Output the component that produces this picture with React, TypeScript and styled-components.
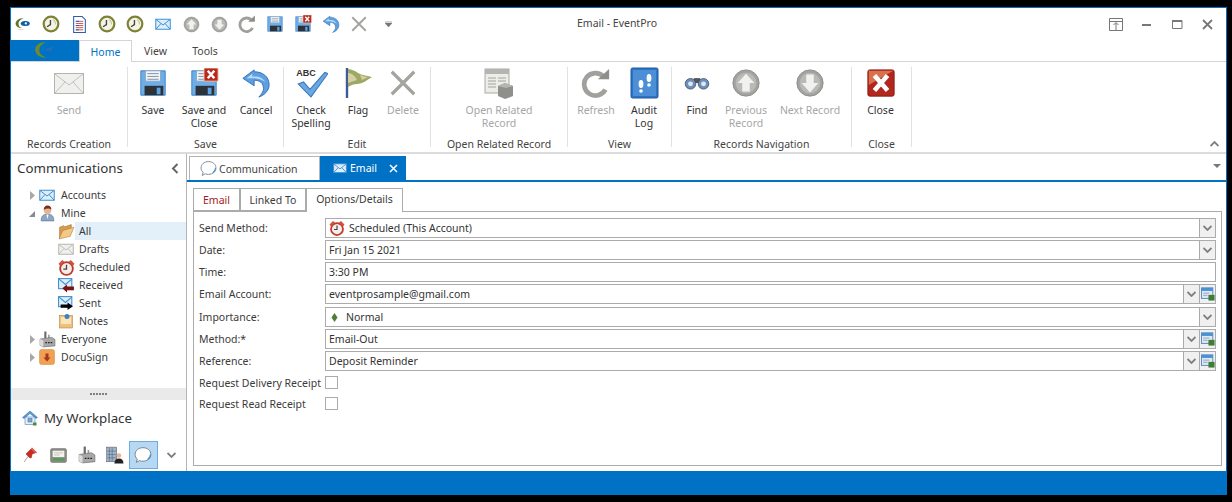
import React from 'react';
import styled, { createGlobalStyle } from 'styled-components';

const Global = createGlobalStyle`
  html, body { margin: 0; padding: 0; background: #000; }
  body { font-family: "Noto Sans", "Liberation Sans", sans-serif; font-size: 10.5px; color: #333; }
  * { box-sizing: border-box; }
`;

const BLUE = '#0072c6';

const Window = styled.div`
  width: 1217px;
  height: 488px;
  margin: 7px 0 0 10px;
  background: #fff;
  border: 1px solid ${BLUE};
  border-bottom: 0;
  display: flex;
  flex-direction: column;
  overflow: hidden;
`;

/* title bar */
const TitleBar = styled.div`
  height: 32px;
  flex: none;
  display: flex;
  align-items: center;
  position: relative;
`;
const Qat = styled.div`
  display: flex;
  align-items: center;
  margin-left: -2px;
`;
const QatSlot = styled.div<{ $w?: number }>`
  width: ${(p) => p.$w ?? 28}px;
  height: 24px;
  display: flex;
  align-items: center;
  justify-content: center;
`;
const Title = styled.div`
  position: absolute;
  left: 520px;
  width: 172px;
  top: 7px;
  text-align: center;
  line-height: 16px;
  color: #444;
`;
const WinButtons = styled.div`
  margin-left: auto;
  display: flex;
  margin-right: 3px;
`;
const WinBtn = styled.div`
  width: 30.5px;
  height: 24px;
  display: flex;
  align-items: center;
  justify-content: center;
`;

/* ribbon tabs */
const TabStrip = styled.div`
  height: 22px;
  flex: none;
  display: flex;
  border-bottom: 1px solid #d4d4d4;
`;
const FileTab = styled.div`
  width: 68px;
  height: 21px;
  background: ${BLUE};
  display: flex;
  align-items: center;
  justify-content: center;
`;
const RibbonTab = styled.div<{ $w: number; $active?: boolean }>`
  width: ${(p) => p.$w}px;
  height: ${(p) => (p.$active ? 22 : 21)}px;
  display: flex;
  align-items: center;
  justify-content: center;
  color: ${(p) => (p.$active ? BLUE : '#444')};
  background: #fff;
  ${(p) => p.$active && 'border: 1px solid #d4d4d4; border-bottom: 0;'}
`;

/* ribbon */
const Ribbon = styled.div`
  height: 92px;
  flex: none;
  display: flex;
  padding-top: 5px;
  border-bottom: 2px solid #dcdcdc;
  position: relative;
`;
const Group = styled.div<{ $w: number }>`
  width: ${(p) => p.$w}px;
  height: 80px;
  flex: none;
  display: flex;
  flex-direction: column;
  border-right: 1px solid #e1e1e1;
`;
const GroupButtons = styled.div<{ $start?: boolean }>`
  height: 71px;
  flex: none;
  display: flex;
  justify-content: ${(p) => (p.$start ? 'flex-start' : 'center')};
`;
const GroupLabel = styled.div`
  height: 9px;
  line-height: 13px;
  text-align: center;
  color: #444;
  white-space: nowrap;
`;
const RibbonBtn = styled.div<{ $w: number; $off?: boolean }>`
  width: ${(p) => p.$w}px;
  display: flex;
  flex-direction: column;
  align-items: center;
  text-align: center;
  line-height: 13px;
  color: ${(p) => (p.$off ? '#a6a6a6' : '#333')};
`;
const BtnIcon = styled.div`
  height: 32px;
  margin-bottom: 5px;
  display: flex;
  align-items: center;
  justify-content: center;
`;
const Collapse = styled.div`
  position: absolute;
  right: 7px;
  bottom: 5px;
  line-height: 0;
`;

/* main area */
const Main = styled.div`
  flex: 1;
  min-height: 0;
  display: flex;
`;
const SidePane = styled.div`
  width: 176px;
  flex: none;
  display: flex;
  flex-direction: column;
  border-right: 1px solid #b4b4b4;
`;
const PaneHeader = styled.div`
  height: 30px;
  padding: 0 7px 2px 6px;
  display: flex;
  align-items: center;
  justify-content: space-between;
  font-size: 13.3px;
  color: #333;
`;
const Tree = styled.div`
  flex: 1;
  padding-top: 2px;
`;
const TreeRow = styled.div`
  height: 18px;
  display: flex;
  align-items: center;
  padding-left: 15px;
`;
const Caret = styled.div`
  width: 12px;
  display: flex;
  justify-content: center;
`;
const TreeIcon = styled.div`
  width: 18px;
  height: 18px;
  display: flex;
  align-items: center;
  justify-content: center;
`;
const ChildRow = styled.div`
  height: 18px;
  display: flex;
  align-items: center;
  padding-left: 46px;
`;
const TreeLabel = styled.div<{ $selected?: boolean; $child?: boolean }>`
  flex: ${(p) => (p.$selected ? 1 : 'none')};
  height: 18px;
  line-height: 18px;
  padding-left: ${(p) => (p.$child ? 4 : 5)}px;
  background: ${(p) => (p.$selected ? '#e3eff9' : 'transparent')};
  color: #3b3b3b;
`;
const Splitter = styled.div`
  height: 12px;
  flex: none;
  background: #eaeaea;
  display: flex;
  align-items: center;
  justify-content: center;
  gap: 1px;
`;
const Grip = styled.i`
  width: 2px;
  height: 2px;
  background: #808080;
`;
const Workplace = styled.div`
  height: 41px;
  flex: none;
  display: flex;
  align-items: center;
  gap: 6px;
  padding: 0 0 5px 11px;
  font-size: 13.3px;
  color: #333;
`;
const NavBar = styled.div`
  height: 30px;
  flex: none;
  padding-left: 5px;
  display: flex;
`;
const NavItem = styled.div<{ $active?: boolean }>`
  width: 28.5px;
  height: 28px;
  display: flex;
  align-items: center;
  justify-content: center;
  ${(p) => p.$active && `background: #b7d8f3; border: 1px solid #6fabe0;`}
`;

/* document */
const Doc = styled.div`
  flex: 1;
  min-width: 0;
  display: flex;
  flex-direction: column;
`;
const DocTabs = styled.div`
  height: 28px;
  flex: none;
  padding: 2px 0 0 2px;
  display: flex;
  position: relative;
  border-bottom: 2px solid ${BLUE};
`;
const DocTab = styled.div<{ $active?: boolean; $w: number }>`
  width: ${(p) => p.$w}px;
  height: 24px;
  display: flex;
  align-items: center;
  gap: ${(p) => (p.$active ? 3 : 2)}px;
  padding-left: ${(p) => (p.$active ? 13 : 10)}px;
  color: ${(p) => (p.$active ? '#fff' : '#444')};
  background: ${(p) => (p.$active ? BLUE : '#fff')};
  ${(p) => !p.$active && 'border: 1px solid #b4b4b4; border-bottom: 0;'}
`;
const TabClose = styled.div`
  margin-left: 9px;
  line-height: 0;
`;
const TabMenu = styled.div`
  position: absolute;
  right: 5px;
  top: 10px;
  width: 0;
  height: 0;
  border: 4px solid transparent;
  border-top: 4px solid #777;
`;
const FormArea = styled.div`
  flex: 1;
  min-height: 0;
  padding: 5px 4px 5px 6px;
  display: flex;
  flex-direction: column;
`;
const InnerTabs = styled.div`
  height: 24px;
  flex: none;
  display: flex;
  align-items: flex-end;
  position: relative;
  z-index: 1;
`;
const InnerTab = styled.div<{ $w: number; $active?: boolean; $red?: boolean }>`
  width: ${(p) => p.$w}px;
  height: ${(p) => (p.$active ? 24 : 23)}px;
  margin-bottom: ${(p) => (p.$active ? -1 : 0)}px;
  padding-bottom: ${(p) => (p.$active ? 3 : 0)}px;
  background: #fff;
  border: 1px solid #ababab;
  ${(p) => p.$active && 'border-bottom: 0;'}
  display: flex;
  align-items: center;
  justify-content: center;
  color: ${(p) => (p.$red ? '#a51c1c' : '#3b3b3b')};
`;
const Panel = styled.div`
  flex: 1;
  min-height: 0;
  border: 1px solid #ababab;
  padding: 6px 5px 0 5px;
`;
const FormRow = styled.div<{ $gap?: number }>`
  display: flex;
  height: 20px;
  align-items: center;
  margin-bottom: ${(p) => p.$gap ?? 2}px;
`;
const FieldLabel = styled.div`
  width: 126px;
  flex: none;
  color: #3b3b3b;
  white-space: nowrap;
`;
const Field = styled.div`
  flex: 1;
  height: 100%;
  display: flex;
  align-items: stretch;
  border: 1px solid #ababab;
  background: #fff;
`;
const FieldText = styled.div`
  flex: 1;
  display: flex;
  align-items: center;
  gap: 4px;
  padding-left: 3px;
  color: #333;
`;
const FieldBtn = styled.div`
  width: 16px;
  flex: none;
  background: #f0f0f0;
  border-left: 1px solid #ababab;
  display: flex;
  align-items: center;
  justify-content: center;
`;
const CheckRow = styled.div`
  display: flex;
  height: 21px;
  align-items: center;
`;
const CheckBox = styled.div`
  width: 13px;
  height: 13px;
  border: 1px solid #ababab;
  background: #fff;
`;
const StatusBar = styled.div`
  height: 24px;
  flex: none;
  background: ${BLUE};
`;

/* drawings */
const Ic: React.FC<{ s: number; vb?: string; children: React.ReactNode }> = ({ s, vb = '0 0 32 32', children }) => (
  <svg width={s} height={s} viewBox={vb} style={{ display: 'block', flex: 'none' }}>{children}</svg>
);

const Envelope = ({ s = 16, gray = false }: { s?: number; gray?: boolean }) => (
  <Ic s={s}>
    <rect x="1.500" y="6.500" width="29" height="20" fill={gray ? '#f0f0ee' : '#dceefa'} stroke={gray ? '#b5b5b0' : '#3f8fd2'} strokeWidth={s > 20 ? 1 : 2} />
    <path d="M2 7l14 11L30 7M2 26l10-11M30 26L20 15" fill="none" stroke={gray ? '#c0c0bb' : '#3f8fd2'} strokeWidth={s > 20 ? 1 : 2} />
  </Ic>
);
const OliveClock = () => (
  <Ic s={18}>
    <circle cx="16" cy="16" r="13" fill="#f4f4e4" stroke="#7d8238" strokeWidth="4" />
    <path d="M15 9v8l-6 4" fill="none" stroke="#444" strokeWidth="2.400" />
    <path d="M20 8a10 10 0 0 1 4 9" fill="none" stroke="#c9cc9a" strokeWidth="2" />
  </Ic>
);
const PageIcon = () => (
  <Ic s={17}>
    <path d="M5 1h16l6 6v24H5z" fill="#fff" stroke="#2a5fb0" strokeWidth="2" />
    <path d="M9 10h14M9 14h14M9 18h14M9 22h14M9 26h14" stroke="#c03a3a" strokeWidth="1.600" />
    <path d="M9 10h6M9 18h6M9 26h6" stroke="#1d4fb0" strokeWidth="1.600" />
  </Ic>
);
const ArrowBall = ({ s = 17, down = false }: { s?: number; down?: boolean }) => (
  <Ic s={s}>
    <circle cx="16" cy="16" r="14" fill="#a3a3a0" stroke="#8d8d8a" />
    <circle cx="16" cy="16" r="11" fill="#b9b9b6" />
    <path d={down ? 'M12 7h8v9h5l-9 10-9-10h5z' : 'M12 25h8v-9h5L16 6 7 16h5z'} fill="#f1f1ef" />
  </Ic>
);
const RefreshIcon = ({ s = 18 }: { s?: number }) => (
  <Ic s={s}>
    <path d="M24 9A12 12 0 1 0 26 23" fill="none" stroke="#a0a09d" strokeWidth="5" />
    <path d="M18 12h12V1z" fill="#8e8e8b" />
  </Ic>
);
const Floppy = ({ s = 18, cross = false }: { s?: number; cross?: boolean }) => (
  <Ic s={s}>
    <path d="M3 3h26v26H3z" fill="#6eaee8" stroke="#3c7fc0" />
    <rect x="8" y="3" width="16" height="11" fill="#f2f5f8" stroke="#8aa9c8" />
    <path d="M10 6h12M10 9h12M10 12h12" stroke="#7d8c9c" />
    <rect x="7" y="19" width="20" height="10" fill="#2c3238" />
    <rect x="20" y="21" width="4" height="7" fill="#5ea2e0" />
    {cross && (
      <>
        <rect x="16" y="0" width="15" height="14" rx="1" fill="#b8281e" stroke="#f2c7a8" />
        <path d="M20 3l7 8M27 3l-7 8" stroke="#fff" strokeWidth="2.600" />
      </>
    )}
  </Ic>
);
const UndoIcon = ({ s = 18 }: { s?: number }) => (
  <Ic s={s}>
    <path d="M14 2L2 11l12 8v-6c6 0 10 3 10 9 0 3-2 6-5 9 6-2 11-7 11-13 0-9-7-14-16-14z" fill="#5d9fe0" stroke="#2f6fb8" />
    <path d="M6 11l6-5v3h3c5 0 9 2 11 6-3-2-7-4-14-4z" fill="#bcdcf6" />
  </Ic>
);
const GrayX = ({ s = 18 }: { s?: number }) => (
  <Ic s={s}>
    <path d="M4 4l24 24M28 4L4 28" stroke="#a3a39f" strokeWidth="3.400" />
  </Ic>
);
const Logo = () => (
  <Ic s={18}>
    <path d="M17 6C8 5 2 11 3 17c1 4 6 7 11 6-5-1-6-5-6-8 0-4 4-8 9-9z" fill="#5d7426" />
    <ellipse cx="20" cy="15" rx="8" ry="4.500" fill="#0d5fa8" />
    <circle cx="21" cy="15" r="2" fill="#fff" />
    <path d="M6 24c4 4 9 3 12 1-4 1-8 1-12-1z" fill="#c0c49a" />
  </Ic>
);
const FileLogo = () => (
  <Ic s={26}>
    <path d="M17 5C8 5 3 10 4 16c1 5 7 9 14 8-7-2-9-6-9-9 0-5 4-8 8-10z" fill="#6d8a2c" />
    <path d="M15 15c3-3 8-4 12-4l-4 5z" fill="#2a6db0" />
  </Ic>
);
const Check = () => (
  <Ic s={34}>
    <text x="2" y="9" fontSize="8.500" fontWeight="700" fontFamily="Liberation Sans, sans-serif" fill="#333">ABC</text>
    <path d="M4 17l5-2 6 7L29 6l3 1-16 22z" fill="#69a8e4" stroke="#3a78bc" />
  </Ic>
);
const FlagIcon = () => (
  <Ic s={32}>
    <path d="M5 1v30" stroke="#3e5a98" strokeWidth="2.400" />
    <path d="M6 2c8 1 10 5 15 6 3 1 6 1 9 2-5 3-9 7-15 7-3 0-6 1-9 3z" fill="#9da867" />
    <path d="M6 6c4 0 7 3 9 7-3 1-6 2-9 3zM18 8c3 1 6 2 8 2-2 1-4 2-6 3z" fill="#d7cfa0" />
  </Ic>
);
const RelatedIcon = () => (
  <Ic s={32}>
    <rect x="2" y="2" width="24" height="24" fill="#ecece9" stroke="#a9a9a5" />
    <rect x="2" y="2" width="24" height="5" fill="#b4b4b0" />
    <path d="M5 11h8M5 14h8M5 17h8M5 20h8M15 11h8M15 14h8" stroke="#a2a29e" />
    <path d="M15 19l7-3 8 3v10l-8 3-7-3z" fill="#8f8f8b" />
    <path d="M15 19l8 2 7-2-8-3z" fill="#b5b5b1" />
  </Ic>
);
const AuditIcon = () => (
  <Ic s={32}>
    <rect x="3" y="1" width="27" height="30" rx="1.500" fill="#2e74c4" stroke="#1e5aa4" />
    <rect x="5" y="3" width="23" height="26" fill="#4d8fd6" />
    <ellipse cx="13" cy="17" rx="2.400" ry="4" fill="#fff" />
    <circle cx="13" cy="24" r="1.800" fill="#fff" />
    <ellipse cx="21" cy="11" rx="2.400" ry="4" fill="#fff" />
    <circle cx="21" cy="18" r="1.800" fill="#fff" />
  </Ic>
);
const Binoculars = () => (
  <Ic s={26}>
    <rect x="12" y="10" width="8" height="6" fill="#555" />
    <circle cx="8" cy="17" r="6.500" fill="#6f8fb8" stroke="#3d4f68" />
    <circle cx="24" cy="17" r="6.500" fill="#6f8fb8" stroke="#3d4f68" />
    <circle cx="8" cy="17" r="3" fill="#dce8f6" />
    <circle cx="24" cy="17" r="3" fill="#dce8f6" />
  </Ic>
);
const CloseBig = () => (
  <Ic s={30}>
    <rect x="2" y="2" width="28" height="28" rx="2" fill="#b2261c" stroke="#8a1a12" />
    <path d="M3 3h26L3 18z" fill="#d9714e" />
    <path d="M9 8l14 16M23 8L9 24" stroke="#fff" strokeWidth="5" />
  </Ic>
);
const Tri = ({ open = false }: { open?: boolean }) => (
  <svg width="7" height="9" viewBox="0 0 7 9" style={{ display: 'block' }}>
    {open ? <path d="M6 2v6H0z" fill="#8a8a8a" /> : <path d="M1 0l5 4.500L1 9z" fill="#a8a8a8" />}
  </svg>
);
const Person = () => (
  <Ic s={17}>
    <path d="M4 30c0-9 4-13 12-13s12 4 12 13z" fill="#8ea6c6" stroke="#52677f" />
    <circle cx="16" cy="10" r="7" fill="#e6b48f" />
    <path d="M9 9c0-6 4-8 7-8s8 2 7 8c-3-3-9-3-14 0z" fill="#7a2e20" />
    <path d="M14 18h4l-2 9z" fill="#fff" />
  </Ic>
);
const Folder = () => (
  <Ic s={17}>
    <path d="M3 29V8l8-3 2 2 12-4v8z" fill="#d99b4c" stroke="#9a6a24" />
    <path d="M2 30l7-16 21-6-7 17z" fill="#f3c98a" stroke="#a87630" />
  </Ic>
);
const Alarm = ({ s = 17 }: { s?: number }) => (
  <Ic s={s}>
    <circle cx="16" cy="18" r="12" fill="#f4eeea" stroke="#c0392b" strokeWidth="3.500" />
    <path d="M16 11v8h-6" fill="none" stroke="#444" strokeWidth="2.400" />
    <path d="M1 9l7-7 4 3-8 8zM31 9l-7-7-4 3 8 8z" fill="#d0523f" />
  </Ic>
);
const MailArrow = ({ color }: { color: string }) => (
  <Ic s={17}>
    <rect x="1" y="3" width="25" height="19" fill="#dceefa" stroke="#3f8fd2" strokeWidth="2" />
    <path d="M2 4l12 10L26 4" fill="none" stroke="#3f8fd2" strokeWidth="2" />
    {color === 'red' ? (
      <path d="M8 21l9-7v4h13v7H17v4z" fill="#7a1414" />
    ) : (
      <path d="M5 18h13v-4l10 7-10 7v-4H5z" fill="#000" />
    )}
  </Ic>
);
const NotesIcon = () => (
  <Ic s={16}>
    <rect x="3" y="5" width="26" height="25" fill="#f0bf7c" stroke="#a8763a" />
    <rect x="6" y="8" width="20" height="14" fill="#fbe4b8" />
    <circle cx="18" cy="7" r="5" fill="#3f7fc2" />
  </Ic>
);
const Plant = ({ s = 17 }: { s?: number }) => (
  <Ic s={s}>
    <rect x="10" y="1" width="4" height="13" fill="#6c6c6c" />
    <rect x="17" y="7" width="3" height="7" fill="#999" />
    <path d="M2 15l22-3 6 4v12l-22 2-6-3z" fill="#a8a8a8" stroke="#5c5c5c" />
    <path d="M2 15l6 3v12l-6-3z" fill="#dcdcdc" />
    <path d="M12 22h3M17 22h3M22 22h3" stroke="#222" strokeWidth="2.400" />
  </Ic>
);
const DocuSign = () => (
  <Ic s={16}>
    <rect x="1" y="1" width="30" height="30" rx="4" fill="#f0a050" stroke="#d58434" />
    <path d="M13 9h6v8h4l-7 8-7-8h4z" fill="#a93420" />
  </Ic>
);
const House = () => (
  <Ic s={16}>
    <path d="M1 15L16 2l15 13-3 2L16 7 4 17z" fill="#5b9ad6" stroke="#2c6aa8" />
    <rect x="6" y="14" width="20" height="15" fill="#e6eff8" stroke="#2c6aa8" />
    <rect x="12" y="17" width="8" height="7" fill="#7fa9d0" stroke="#2c6aa8" />
    <rect x="22" y="25" width="7" height="6" fill="#4f8a3c" />
  </Ic>
);
const Pin = () => (
  <Ic s={16}>
    <path d="M4 30l9-12" stroke="#a5a5a5" strokeWidth="2" />
    <path d="M10 12l8-8 8 8-6 2-1 7-3 1-8-8z" fill="#cc2a22" stroke="#961810" />
    <path d="M18 3l10 10 2-2L20 1z" fill="#e24a3c" />
  </Ic>
);
const CardIcon = () => (
  <Ic s={17}>
    <rect x="1" y="3" width="30" height="26" rx="3" fill="#8a8c84" stroke="#6c6e68" />
    <rect x="5" y="7" width="22" height="12" fill="#f2f2ee" />
    <path d="M8 11h16M8 15h10" stroke="#9a9a96" />
    <rect x="5" y="21" width="22" height="5" fill="#5a9a58" />
  </Ic>
);
const Building = () => (
  <Ic s={18}>
    <rect x="1" y="2" width="18" height="26" fill="#9fb4cc" stroke="#55606e" />
    <path d="M6 3v24M11 3v24M2 9h16M2 15h16M2 21h16" stroke="#55606e" />
    <circle cx="23" cy="17" r="4" fill="#e6b48f" />
    <path d="M15 31c0-6 3-9 8-9s8 3 8 9z" fill="#222" />
  </Ic>
);
const Bubble = ({ s = 16 }: { s?: number }) => (
  <Ic s={s}>
    <path d="M16 3c8 0 14 5 14 12s-6 12-14 12c-2 0-4 0-6-1l-6 3 2-6c-3-2-4-5-4-8C2 8 8 3 16 3z" fill="#fff" stroke="#6f7d8a" strokeWidth={s > 18 ? 1.400 : 1.600} />
    <path d="M24 24c3-2 5-5 5-9" fill="none" stroke="#3f8fd2" strokeWidth="2" />
  </Ic>
);
const Chevron = ({ up = false, color = '#808080' }: { up?: boolean; color?: string }) => (
  <svg width="9" height="6" viewBox="0 0 9 6" style={{ display: 'block' }}>
    <path d={up ? 'M.5 5l4-4 4 4' : 'M.5 1l4 4 4-4'} fill="none" stroke={color} strokeWidth="1.800" />
  </svg>
);
const AddIcon = () => (
  <Ic s={14}>
    <rect x="1" y="2" width="26" height="24" fill="#dfe9f4" stroke="#4c7fb8" strokeWidth="2" />
    <rect x="1" y="2" width="26" height="7" fill="#4a90d6" />
    <path d="M5 14h14M5 19h10" stroke="#8aa0b6" strokeWidth="2" />
    <rect x="17" y="18" width="14" height="13" fill="#3f7d35" />
  </Ic>
);

const Btn = ({ w, icon, off, children }: { w: number; icon: React.ReactNode; off?: boolean; children: React.ReactNode }) => (
  <RibbonBtn $w={w} $off={off}>
    <BtnIcon>{icon}</BtnIcon>
    <div>{children}</div>
  </RibbonBtn>
);

const Row = ({ label, gap, children }: { label: string; gap?: number; children: React.ReactNode }) => (
  <FormRow $gap={gap}>
    <FieldLabel>{label}</FieldLabel>
    <Field>{children}</Field>
  </FormRow>
);

const Drop = () => (
  <FieldBtn>
    <Chevron />
  </FieldBtn>
);
const Add = () => (
  <FieldBtn>
    <AddIcon />
  </FieldBtn>
);

const qatIcons = [
  <Logo />, <OliveClock />, <PageIcon />, <OliveClock />, <OliveClock />, <Envelope />,
  <ArrowBall />, <ArrowBall down />, <RefreshIcon />, <Floppy />, <Floppy cross />, <UndoIcon />, <GrayX />,
];

const children = [
  { label: 'All', icon: <Folder />, selected: true },
  { label: 'Drafts', icon: <Envelope gray /> },
  { label: 'Scheduled', icon: <Alarm /> },
  { label: 'Received', icon: <MailArrow color="red" /> },
  { label: 'Sent', icon: <MailArrow color="black" /> },
  { label: 'Notes', icon: <NotesIcon /> },
];

export default function App() {
  return (
    <>
      <Global />
      <Window>
        <TitleBar>
          <Qat>
            {qatIcons.map((icon, i) => (
              <QatSlot key={i}>{icon}</QatSlot>
            ))}
            <QatSlot $w={30}>
              <svg width="7" height="7" viewBox="0 0 7 7"><path d="M0 0h7M0 2h7l-3.500 4z" fill="#777" stroke="#777" strokeWidth=".6" /></svg>
            </QatSlot>
          </Qat>
          <Title>Email - EventPro</Title>
          <WinButtons>
            <WinBtn>
              <svg width="14" height="13" viewBox="0 0 14 13"><path d="M.5.5h13v12H.5zM.5 3.500h13M7 5v7M4.500 7L7 4.500 9.500 7" fill="none" stroke="#777" /></svg>
            </WinBtn>
            <WinBtn>
              <svg width="10" height="3" viewBox="0 0 10 3"><rect width="9" height="2" y="1" fill="#777" /></svg>
            </WinBtn>
            <WinBtn>
              <svg width="11" height="10" viewBox="0 0 11 10"><path d="M.5 1.500h9.500v8H.5z" fill="none" stroke="#777" /><rect width="10" height="2" y="1" fill="#777" /></svg>
            </WinBtn>
            <WinBtn>
              <svg width="11" height="11" viewBox="0 0 11 11"><path d="M1 1l9 9M10 1l-9 9" stroke="#777" strokeWidth="1.800" /></svg>
            </WinBtn>
          </WinButtons>
        </TitleBar>

        <TabStrip>
          <FileTab><FileLogo /></FileTab>
          <RibbonTab $w={53} $active>Home</RibbonTab>
          <RibbonTab $w={47}>View</RibbonTab>
          <RibbonTab $w={52}>Tools</RibbonTab>
        </TabStrip>

        <Ribbon>
          <Group $w={117}>
            <GroupButtons><Btn w={60} off icon={<Envelope s={32} gray />}>Send</Btn></GroupButtons>
            <GroupLabel>Records Creation</GroupLabel>
          </Group>
          <Group $w={156}>
            <GroupButtons $start>
              <Btn w={50} icon={<Floppy s={30} />}>Save</Btn>
              <Btn w={52} icon={<Floppy s={30} cross />}>Save and Close</Btn>
              <Btn w={52} icon={<UndoIcon s={30} />}>Cancel</Btn>
            </GroupButtons>
            <GroupLabel>Save</GroupLabel>
          </Group>
          <Group $w={147}>
            <GroupButtons $start>
              <Btn w={54} icon={<Check />}>Check Spelling</Btn>
              <Btn w={40} icon={<FlagIcon />}>Flag</Btn>
              <Btn w={50} off icon={<GrayX s={30} />}>Delete</Btn>
            </GroupButtons>
            <GroupLabel>Edit</GroupLabel>
          </Group>
          <Group $w={137}>
            <GroupButtons><Btn w={84} off icon={<RelatedIcon />}>Open Related Record</Btn></GroupButtons>
            <GroupLabel>Open Related Record</GroupLabel>
          </Group>
          <Group $w={104}>
            <GroupButtons $start>
              <Btn w={56} off icon={<RefreshIcon s={30} />}>Refresh</Btn>
              <Btn w={40} icon={<AuditIcon />}>Audit Log</Btn>
            </GroupButtons>
            <GroupLabel>View</GroupLabel>
          </Group>
          <Group $w={180}>
            <GroupButtons $start>
              <Btn w={50} icon={<Binoculars />}>Find</Btn>
              <Btn w={48} off icon={<ArrowBall s={30} />}>Previous Record</Btn>
              <Btn w={80} off icon={<ArrowBall s={30} down />}>Next Record</Btn>
            </GroupButtons>
            <GroupLabel>Records Navigation</GroupLabel>
          </Group>
          <Group $w={60}>
            <GroupButtons $start><Btn w={57} icon={<CloseBig />}>Close</Btn></GroupButtons>
            <GroupLabel>Close</GroupLabel>
          </Group>
          <Collapse><Chevron up /></Collapse>
        </Ribbon>

        <Main>
          <SidePane>
            <PaneHeader>
              Communications
              <svg width="8" height="11" viewBox="0 0 8 11"><path d="M6.500 1L2 5.500 6.500 10" fill="none" stroke="#666" strokeWidth="2" /></svg>
            </PaneHeader>
            <Tree>
              <TreeRow>
                <Caret><Tri /></Caret>
                <TreeIcon><Envelope /></TreeIcon>
                <TreeLabel>Accounts</TreeLabel>
              </TreeRow>
              <TreeRow>
                <Caret><Tri open /></Caret>
                <TreeIcon><Person /></TreeIcon>
                <TreeLabel>Mine</TreeLabel>
              </TreeRow>
              {children.map((c) => (
                <ChildRow key={c.label}>
                  <TreeIcon>{c.icon}</TreeIcon>
                  <TreeLabel $child $selected={c.selected}>{c.label}</TreeLabel>
                </ChildRow>
              ))}
              <TreeRow>
                <Caret><Tri /></Caret>
                <TreeIcon><Plant /></TreeIcon>
                <TreeLabel>Everyone</TreeLabel>
              </TreeRow>
              <TreeRow>
                <Caret><Tri /></Caret>
                <TreeIcon><DocuSign /></TreeIcon>
                <TreeLabel>DocuSign</TreeLabel>
              </TreeRow>
            </Tree>
            <Splitter>
              {[0, 1, 2, 3, 4, 5].map((i) => <Grip key={i} />)}
            </Splitter>
            <Workplace><House />My Workplace</Workplace>
            <NavBar>
              <NavItem><Pin /></NavItem>
              <NavItem><CardIcon /></NavItem>
              <NavItem><Plant s={18} /></NavItem>
              <NavItem><Building /></NavItem>
              <NavItem $active><Bubble s={18} /></NavItem>
              <NavItem><Chevron /></NavItem>
            </NavBar>
          </SidePane>

          <Doc>
            <DocTabs>
              <DocTab $w={131}><Bubble s={17} />Communication</DocTab>
              <DocTab $w={86} $active>
                <Envelope s={14} />Email
                <TabClose>
                  <svg width="9" height="9" viewBox="0 0 9 9"><path d="M1 1l7 7M8 1L1 8" stroke="#fff" strokeWidth="1.500" /></svg>
                </TabClose>
              </DocTab>
              <TabMenu />
            </DocTabs>
            <FormArea>
              <InnerTabs>
                <InnerTab $w={47} $red>Email</InnerTab>
                <InnerTab $w={66}>Linked To</InnerTab>
                <InnerTab $w={97} $active>Options/Details</InnerTab>
              </InnerTabs>
              <Panel>
                <Row label="Send Method:">
                  <FieldText><Alarm s={16} />Scheduled (This Account)</FieldText>
                  <Drop />
                </Row>
                <Row label="Date:">
                  <FieldText>Fri Jan 15 2021</FieldText>
                  <Drop />
                </Row>
                <Row label="Time:">
                  <FieldText>3:30 PM</FieldText>
                </Row>
                <Row label="Email Account:" gap={3}>
                  <FieldText>eventprosample@gmail.com</FieldText>
                  <Drop /><Add />
                </Row>
                <Row label="Importance:">
                  <FieldText>
                    <svg width="13" height="9" viewBox="0 0 13 9"><path d="M5.500 0l3 4.500-3 4.500-3-4.500z" fill="#4f7d3a" /></svg>
                    Normal
                  </FieldText>
                  <Drop />
                </Row>
                <Row label="Method:*">
                  <FieldText>Email-Out</FieldText>
                  <Drop /><Add />
                </Row>
                <Row label="Reference:" gap={1}>
                  <FieldText>Deposit Reminder</FieldText>
                  <Drop /><Add />
                </Row>
                <CheckRow>
                  <FieldLabel>Request Delivery Receipt</FieldLabel>
                  <CheckBox />
                </CheckRow>
                <CheckRow>
                  <FieldLabel>Request Read Receipt</FieldLabel>
                  <CheckBox />
                </CheckRow>
              </Panel>
            </FormArea>
          </Doc>
        </Main>
        <StatusBar />
      </Window>
    </>
  );
}
